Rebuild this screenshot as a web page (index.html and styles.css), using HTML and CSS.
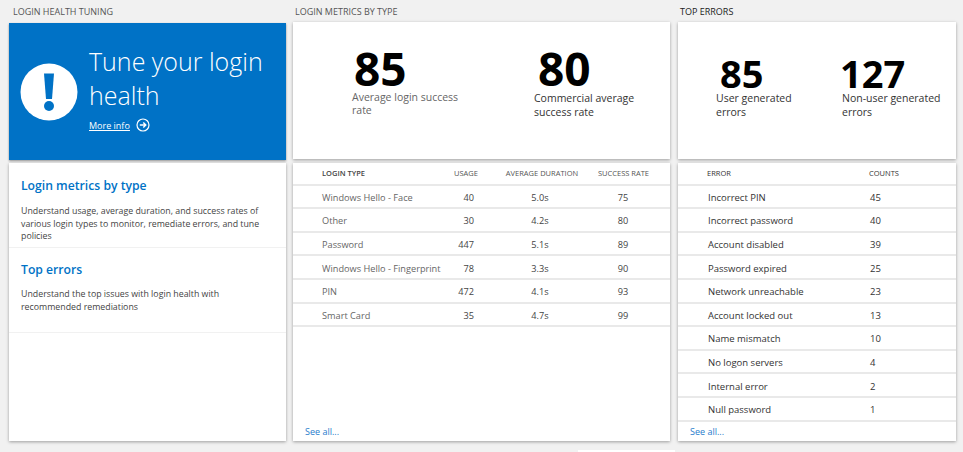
FILE: index.html
```html
<!DOCTYPE html>
<html lang="en">
<head>
  <meta charset="UTF-8">
  <title>Login health</title>
  <link rel="stylesheet" href="styles.css">
</head>
<body>
  <div class="board">
    <!-- Left column -->
    <section class="col col-tuning">
      <h2 class="col-title">Login health tuning</h2>
      <div class="hero">
        <svg class="hero-icon" width="58" height="58" viewBox="0 0 58 58">
          <circle cx="29" cy="29" r="28.5" fill="#fff"/>
          <path d="M24 10.500h10l-2 25.500h-6z" fill="#0072c6"/>
          <circle cx="29" cy="43" r="5" fill="#0072c6"/>
        </svg>
        <div class="hero-text">
          <h1>Tune your login health</h1>
          <a class="more-link" href="#"><span>More info</span>
            <svg width="14" height="14" viewBox="0 0 14 14" fill="none" stroke="#fff">
              <circle cx="7" cy="7" r="6" stroke-width="1.200"/>
              <path d="M3.800 7h6M7.300 4.500L9.800 7l-2.500 2.500" stroke-width="1.400"/>
            </svg>
          </a>
        </div>
      </div>
      <div class="card nav-card">
        <div class="nav-item">
          <h3>Login metrics by type</h3>
          <p>Understand usage, average duration, and success rates of various login types to monitor, remediate errors, and tune policies</p>
        </div>
        <div class="nav-item nav-item-short">
          <h3>Top errors</h3>
          <p>Understand the top issues with login health with recommended remediations</p>
        </div>
      </div>
    </section>

    <!-- Middle column -->
    <section class="col col-metrics">
      <h2 class="col-title">Login metrics by type</h2>
      <div class="card stats stats-metrics">
        <div class="stat">
          <div class="stat-num">85</div>
          <div class="stat-label stat-label-grey">Average login success rate</div>
        </div>
        <div class="stat">
          <div class="stat-num">80</div>
          <div class="stat-label">Commercial average success rate</div>
        </div>
      </div>
      <div class="card list">
        <div class="row row-head">
          <span>Login type</span><span class="num">Usage</span><span class="num">Average duration</span><span class="num">Success rate</span>
        </div>
        <div class="row"><span>Windows Hello - Face</span><span class="num">40</span><span class="num">5.0s</span><span class="num">75</span></div>
        <div class="row"><span>Other</span><span class="num">30</span><span class="num">4.2s</span><span class="num">80</span></div>
        <div class="row"><span>Password</span><span class="num">447</span><span class="num">5.1s</span><span class="num">89</span></div>
        <div class="row"><span>Windows Hello - Fingerprint</span><span class="num">78</span><span class="num">3.3s</span><span class="num">90</span></div>
        <div class="row"><span>PIN</span><span class="num">472</span><span class="num">4.1s</span><span class="num">93</span></div>
        <div class="row"><span>Smart Card</span><span class="num">35</span><span class="num">4.7s</span><span class="num">99</span></div>
        <a class="see-all" href="#">See all...</a>
      </div>
    </section>

    <!-- Right column -->
    <section class="col col-errors">
      <h2 class="col-title">Top errors</h2>
      <div class="card stats stats-errors">
        <div class="stat">
          <div class="stat-num">85</div>
          <div class="stat-label">User generated errors</div>
        </div>
        <div class="stat stat-wide">
          <div class="stat-num">127</div>
          <div class="stat-label">Non-user generated errors</div>
        </div>
      </div>
      <div class="card list">
        <div class="row row-head"><span>Error</span><span>Counts</span></div>
        <div class="row"><span>Incorrect PIN</span><span>45</span></div>
        <div class="row"><span>Incorrect password</span><span>40</span></div>
        <div class="row"><span>Account disabled</span><span>39</span></div>
        <div class="row"><span>Password expired</span><span>25</span></div>
        <div class="row"><span>Network unreachable</span><span>23</span></div>
        <div class="row"><span>Account locked out</span><span>13</span></div>
        <div class="row"><span>Name mismatch</span><span>10</span></div>
        <div class="row"><span>No logon servers</span><span>4</span></div>
        <div class="row"><span>Internal error</span><span>2</span></div>
        <div class="row"><span>Null password</span><span>1</span></div>
        <a class="see-all" href="#">See all...</a>
      </div>
    </section>
  </div>
  <div class="edge-card"></div>
</body>
</html>
```

FILE: styles.css
```css
/* General page */
html, body {
  height: 452px;
  overflow: hidden;
}
body {
  margin: 0;
  background-color: #f1f1f1;
  font-family: "Open Sans", "Noto Sans", sans-serif;
  color: #333;
}
.board {
  display: grid;
  grid-template-columns: 277px 377px 279px;
  column-gap: 7px;
  padding-left: 9px;
}
.col-errors {
  margin-left: 1px;
}
.col {
  display: flex;
  flex-direction: column;
  height: 441px;
}
.col-title {
  margin: 0 0 0 4px;
  height: 22px;
  font-size: 9px;
  font-weight: 400;
  line-height: 23px;
  text-transform: uppercase;
  color: #555;
}
.col-metrics .col-title {
  margin-left: 2px;
}
.col-errors .col-title {
  margin-left: 2px;
  color: #222;
}
.card {
  background-color: #fff;
  box-shadow: 0 1px 3px rgba(0, 0, 0, 0.35);
}

/* Blue banner */
.hero {
  display: flex;
  height: 137px;
  margin-top: 1px;
  margin-bottom: 3px;
  background-color: #0072c6;
  color: #fff;
  box-shadow: 0 1px 2px rgba(0, 0, 0, 0.4);
}
.hero-icon {
  flex: none;
  margin: 40px 0 0 11px;
}
.hero-text {
  padding: 22px 0 0 11px;
}
.hero-text h1 {
  margin: 0;
  width: 190px;
  font-size: 25px;
  font-weight: 300;
  line-height: 33.500px;
}
.more-link {
  display: flex;
  align-items: center;
  gap: 6px;
  margin-top: 6px;
  font-size: 9px;
  color: #fff;
}
.more-link span {
  text-decoration: underline;
}

/* Left cards */
.nav-card {
  flex: 1;
}
.nav-item {
  height: 84px;
  padding-left: 12px;
  border-bottom: 1px solid #f1f1f1;
}
.nav-item h3 {
  margin: 0;
  padding-top: 14px;
  font-size: 12.200px;
  font-weight: 600;
  line-height: 18px;
  color: #0072c6;
}
.nav-item p {
  margin: 10px 0 0;
  width: 262px;
  font-size: 8.800px;
  line-height: 12.500px;
  color: #444;
}
.nav-item-short h3 {
  padding-top: 13px;
}
.nav-item-short p {
  margin-top: 9px;
  width: 210px;
}

/* Big numbers */
.stats {
  display: grid;
  height: 137px;
  margin-bottom: 4px;
  box-sizing: border-box;
}
.stats-metrics {
  grid-template-columns: 182px 130px;
  padding: 24px 0 0 59px;
}
.stats-errors {
  grid-template-columns: 126px 110px;
  padding: 34px 0 0 38px;
}
.stat-num {
  font-weight: 700;
  color: #000;
}
.stats-metrics .stat-num {
  padding-left: 2px;
  font-size: 46px;
  line-height: 45px;
}
.stats-metrics .stat + .stat .stat-num {
  padding-left: 4px;
}
.stats-errors .stat-num {
  padding-left: 4px;
  font-size: 38px;
  line-height: 35px;
}
.stats-errors .stat {
  width: 100px;
}
.stats-errors .stat-wide {
  width: 110px;
}
.stats-errors .stat-wide .stat-num {
  margin-left: -2px;
  padding-left: 0;
}
.stat-label {
  font-size: 10.500px;
  line-height: 14px;
  color: #333;
}
.stat-label-grey {
  width: 115px;
  line-height: 13px;
  color: #666;
}

/* Tables */
.list {
  position: relative;
  flex: 1;
}
.row {
  display: grid;
  align-items: center;
  height: 23.600px;
  padding-top: 2px;
  box-sizing: border-box;
  border-bottom: 2px solid #e9e9e9;
  font-size: 9.500px;
  white-space: nowrap;
}
.col-metrics .row {
  grid-template-columns: 124px 40px 112px 50px;
  padding-left: 29px;
  font-size: 9.200px;
  color: #666;
}
.col-errors .row {
  grid-template-columns: 162px 60px;
  padding-left: 30px;
  color: #333;
}
.num {
  text-align: center;
  color: #444;
}
.row:not(.row-head) .num:nth-child(2) {
  padding-right: 12px;
  text-align: right;
}
.row:not(.row-head) .num:nth-child(3) {
  padding-right: 4px;
}
.row-head,
.col-metrics .row-head,
.col-errors .row-head {
  height: 22.600px;
  padding-top: 0;
  font-size: 7.500px;
  text-transform: uppercase;
}
.col-errors .row-head {
  padding-left: 29px;
}
.row-head .num {
  color: #555;
}
.col-metrics .row-head span:first-child {
  font-weight: 600;
  color: #444;
}
.see-all {
  position: absolute;
  left: 12px;
  bottom: 3px;
  font-size: 9px;
  text-decoration: none;
  color: #1f7ccc;
}
.edge-card {
  position: absolute;
  left: 578px;
  top: 450px;
  width: 97px;
  height: 2px;
  background-color: #fff;
}
```
